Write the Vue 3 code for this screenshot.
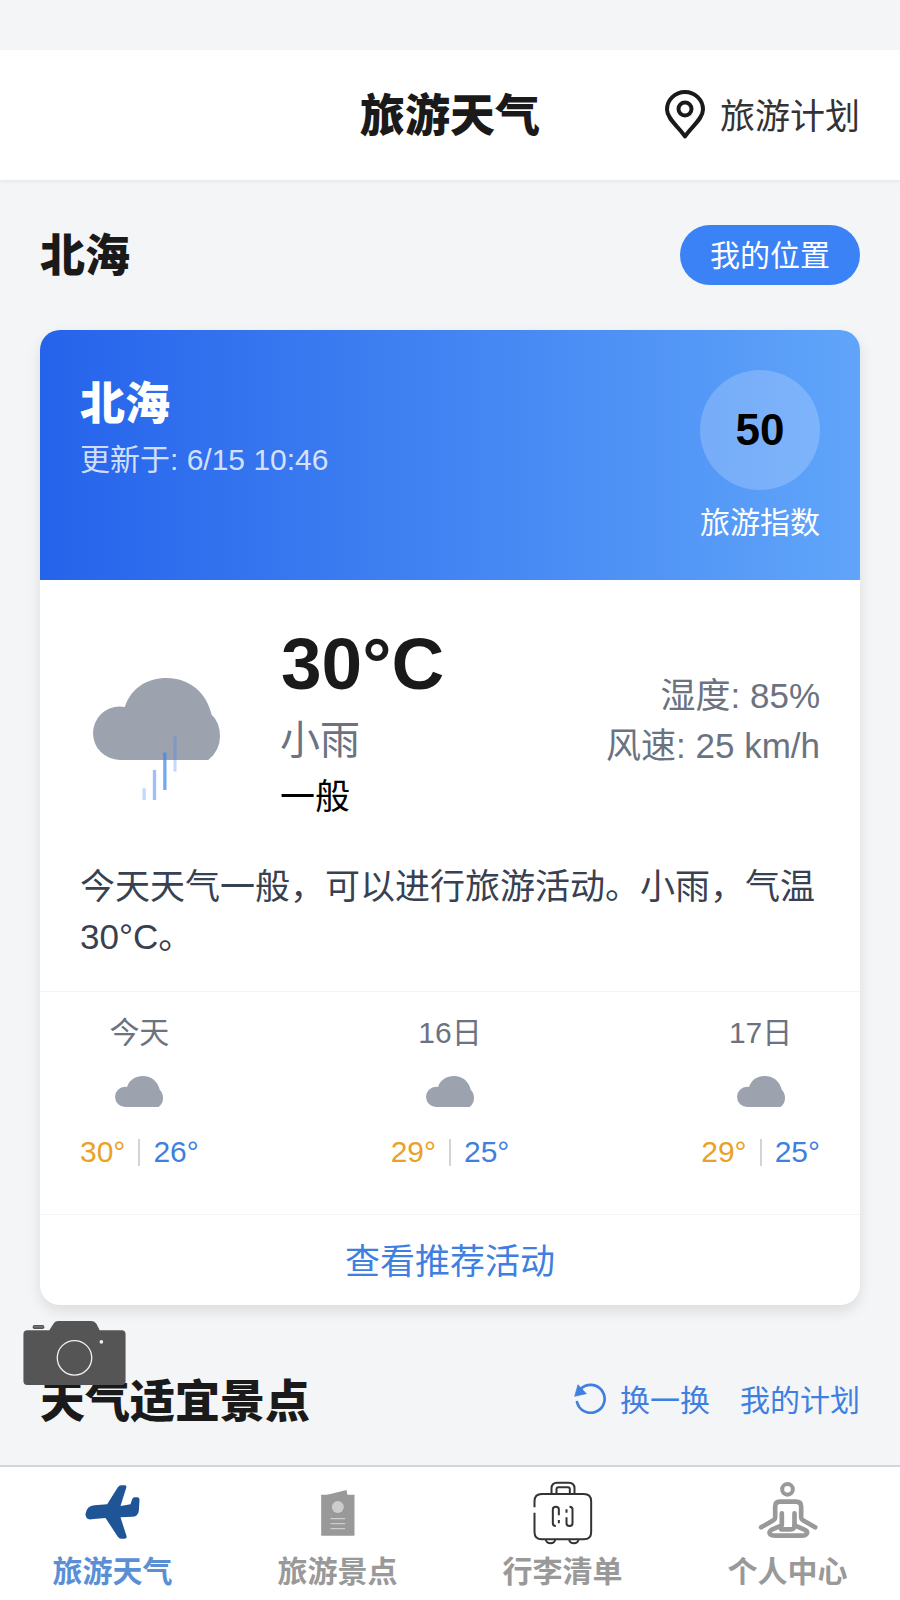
<script setup>
const cloud = 'M240 480A80 80 0 0 1 240 320Q248 320 255 322C275 262 325 235 380 235C450 235 500 280 515 345Q540 368 540 410Q540 452 505 480Z'
const forecast = [
  { day: '今天', high: 30, low: 26 },
  { day: '16日', high: 29, low: 25 },
  { day: '17日', high: 29, low: 25 }
]
</script>

<template>
  <div class="page">
    <header class="topbar">
      <span></span>
      <h1 class="app-title">旅游天气</h1>
      <div class="plan">
        <svg class="pin" viewBox="0 0 40 49" fill="none" stroke="#1a1a1a" stroke-width="4">
          <path d="M20 46.5C14 37 2 29 2 19.5A18 17.5 0 0 1 38 19.5C38 29 26 37 20 46.5Z" stroke-linejoin="round" />
          <circle cx="20" cy="19" r="6.5" />
        </svg>
        <span class="plan-text">旅游计划</span>
      </div>
    </header>

    <main class="content">
      <div class="loc-row">
        <h2 class="heading">北海</h2>
        <button class="loc-btn">我的位置</button>
      </div>

      <section class="card">
        <div class="card-head">
          <div>
            <div class="city">北海</div>
            <div class="updated">更新于: 6/15 10:46</div>
          </div>
          <div class="index">
            <div class="index-circle">50</div>
            <div class="index-label">旅游指数</div>
          </div>
        </div>

        <div class="now">
          <svg class="now-icon" viewBox="160 235 380 365">
            <path :d="cloud" fill="#9ca3af" />
            <g fill="#3b82f6">
              <rect x="401" y="410" width="9" height="105" opacity=".3" />
              <rect x="370" y="458" width="10" height="112" opacity=".7" />
              <rect x="339" y="510" width="10" height="90" opacity=".5" />
              <rect x="308" y="565" width="10" height="35" opacity=".3" />
            </g>
          </svg>
          <div class="now-main">
            <div class="temp">30°C</div>
            <div class="cond">小雨</div>
            <div class="grade">一般</div>
          </div>
          <div class="now-side">
            <div>湿度: 85%</div>
            <div>风速: 25 km/h</div>
          </div>
        </div>

        <p class="desc">今天天气一般，可以进行旅游活动。小雨，气温30°C。</p>

        <div class="forecast">
          <div v-for="f in forecast" :key="f.day" class="day">
            <div class="day-name">{{ f.day }}</div>
            <svg class="day-icon" viewBox="160 235 380 245">
              <path :d="cloud" fill="#9ca3af" />
            </svg>
            <div class="day-temp">
              <span class="high">{{ f.high }}°</span>
              <i class="sep"></i>
              <span class="low">{{ f.low }}°</span>
            </div>
          </div>
        </div>

        <div class="card-link">查看推荐活动</div>
      </section>

      <div class="spots-row">
        <h2 class="heading">天气适宜景点</h2>
        <div class="spots-actions">
          <span class="swap">
            <svg class="refresh" viewBox="370 250 105 96" fill="none">
              <path d="M392 272A42 42 0 1 1 382 310" stroke="currentColor" stroke-width="8" stroke-linecap="round" />
              <path d="M385 258L375 293L410 285Z" fill="currentColor" stroke="currentColor" stroke-width="2" stroke-linejoin="round" />
            </svg>
            换一换
          </span>
          <span>我的计划</span>
        </div>
      </div>
    </main>

    <nav class="tabbar">
      <div class="tab active">
        <svg class="tab-icon" viewBox="-7.5 0 270 240">
          <path fill="#1f5496" d="M45 132Q48 108 72 106L110 103L142 52Q146 46 152 46H162Q170 46 167 54L150 108L180 103L185 88Q187 82 192 82H200Q207 82 207 90L205 122Q203 140 185 140L150 142L168 198Q170 206 162 206H152Q146 206 142 200L105 144L62 148Q45 150 45 132Z" />
        </svg>
        <span>旅游天气</span>
      </div>
      <div class="tab">
        <svg class="tab-icon" viewBox="877.5 510 270 240">
          <path fill="#999" d="M975 586L1038 570L1041 586Z" />
          <rect x="962" y="584" width="100" height="123" rx="2" fill="#999" />
          <circle cx="1012" cy="621" r="18" fill="#ccc" />
          <path d="M990 656H1034M990 671H1034M990 686H1034" stroke="#ccc" stroke-width="4" />
        </svg>
        <span>旅游景点</span>
      </div>
      <div class="tab">
        <svg class="tab-icon" viewBox="-7.5 0 270 240" fill="none" stroke="#333" stroke-width="6">
          <path d="M42 112V94Q42 72 64 72H190Q212 72 212 94V186Q212 208 190 208H64Q42 208 42 186V128" />
          <path d="M93 72V55Q93 38 110 38H145Q162 38 162 55V72M108 72V58Q108 52 114 52H142Q148 52 148 58V72" />
          <path d="M76 208A14 12 0 0 0 104 208M146 208A14 12 0 0 0 174 208" />
          <path d="M115 136V118Q115 110 106 110Q97 110 97 118V160Q97 168 106 168M115 150V160" />
          <path d="M138 142V160Q138 168 147 168Q156 168 156 160V118Q156 110 147 110M138 118V128" />
        </svg>
        <span>行李清单</span>
      </div>
      <div class="tab">
        <svg class="tab-icon" viewBox="7.5 0 270 240" fill="none" stroke="#999" stroke-width="14" stroke-linecap="round" stroke-linejoin="round">
          <circle cx="141" cy="58" r="16" stroke-width="12" />
          <path d="M62 172L100 150Q104 148 104 142V110Q104 95 118 95H166Q182 95 182 110V142Q182 148 186 150L224 172" />
          <path d="M124 130V166L96 178Q82 186 90 194Q94 197 104 197H182Q198 197 200 188Q200 182 190 178L162 166V130" />
          <path d="M122 178H150Q163 178 162 166" />
        </svg>
        <span>个人中心</span>
      </div>
    </nav>

    <svg class="camera" viewBox="40 32 308 193">
      <rect x="68" y="44" width="35" height="12" rx="5" fill="#555" />
      <rect x="72" y="48" width="27" height="3" fill="#888" />
      <path fill="#555" d="M52 60H118L132 38Q136 32 145 32H245Q255 32 260 40L270 60H336Q348 60 348 72V213Q348 225 336 225H52Q40 225 40 213V72Q40 60 52 60Z" />
      <circle cx="194" cy="143" r="52" fill="none" stroke="#f0f0f0" stroke-width="4" />
      <circle cx="275" cy="95" r="5.5" fill="#f0f0f0" />
    </svg>
  </div>
</template>

<style>
html, body { margin: 0; background: #f3f5f7; }
</style>

<style scoped>
.page {
  position: relative;
  width: 900px;
  height: 1600px;
  overflow: hidden;
  display: flex;
  flex-direction: column;
  padding-top: 50px;
  box-sizing: border-box;
  background: #f3f5f7;
  font-family: "Liberation Sans", "Noto Sans CJK SC", sans-serif;
  color: #1a1a1a;
}
.topbar {
  flex: none;
  height: 130px;
  display: grid;
  grid-template-columns: 1fr auto 1fr;
  align-items: center;
  padding: 0 40px;
  background: #fff;
  box-shadow: 0 2px 4px rgba(0, 0, 0, .06);
  position: relative;
}
.app-title {
  margin: 0;
  box-sizing: border-box;
  height: 60px;
  padding-top: 2px;
  font-size: 45px;
  font-weight: 900;
  line-height: 60px;
}
.plan {
  justify-self: end;
  display: flex;
  align-items: center;
  gap: 15px;
  font-size: 35px;
  color: #333;
}
.plan-text { margin-bottom: 4px; }
.pin { width: 40px; height: 49px; margin-bottom: 2px; }
.content { flex: 1; min-height: 0; overflow: hidden; padding: 45px 40px 0; }
.loc-row, .spots-row { display: flex; justify-content: space-between; align-items: center; }
.heading {
  margin: 0;
  box-sizing: border-box;
  height: 60px;
  padding-top: 2px;
  font-size: 45px;
  font-weight: 900;
  line-height: 60px;
}
.loc-btn {
  width: 180px;
  height: 60px;
  border: 0;
  border-radius: 30px;
  padding: 0 0 4px;
  background: #3b82f6;
  color: #fff;
  font: inherit;
  font-size: 30px;
}
.card {
  margin-top: 45px;
  border-radius: 20px;
  overflow: hidden;
  background: #fff;
  box-shadow: 0 6px 14px rgba(0, 0, 0, .1);
}
.card-head {
  height: 250px;
  box-sizing: border-box;
  padding: 40px;
  display: flex;
  justify-content: space-between;
  color: #fff;
  background: linear-gradient(90deg, #2563eb, #60a5fa);
}
.city { font-size: 45px; font-weight: 900; line-height: 70px; }
.updated { font-size: 30px; line-height: 40px; color: rgba(255, 255, 255, .8); }
.index { width: 120px; text-align: center; }
.index-circle {
  height: 120px;
  border-radius: 50%;
  background: rgba(255, 255, 255, .2);
  color: #000;
  font-size: 44px;
  font-weight: 700;
  line-height: 120px;
}
.index-label { margin-top: 10px; font-size: 30px; line-height: 45px; white-space: nowrap; }
.now { display: flex; align-items: center; padding: 42px 40px 0; }
.now-icon { flex: none; width: 127px; height: 122px; margin: 34px 60px 0 13px; }
.now-main { flex: 1; }
.temp { margin: 2px 0 0 1px; font-size: 73px; font-weight: 700; line-height: 80px; }
.cond { margin-top: 11px; font-size: 40px; line-height: 50px; color: #6b7280; }
.grade { margin-top: 7px; font-size: 35px; line-height: 50px; color: #000; }
.now-side { margin-bottom: 2px; text-align: right; font-size: 35px; line-height: 50px; color: #6b7280; }
.desc { margin: 40px 0 0; padding: 0 40px 29px; font-size: 35px; line-height: 50px; color: #374151; }
.forecast {
  display: flex;
  justify-content: space-between;
  padding: 21px 40px 42px;
  border-top: 1px solid #f3f4f6;
  border-bottom: 1px solid #f3f4f6;
}
.day { display: flex; flex-direction: column; align-items: center; }
.day-name { font-size: 30px; line-height: 40px; color: #6b7280; }
.day-icon { width: 48px; height: 31px; margin-top: 23px; }
.day-temp {
  display: flex;
  align-items: center;
  gap: 13px;
  margin-top: 25px;
  font-size: 30px;
  line-height: 40px;
}
.high { color: #e9a126; }
.low { color: #3f7fe0; }
.sep { width: 2px; height: 27px; background: #d1d5db; }
.card-link {
  height: 90px;
  box-sizing: border-box;
  padding-bottom: 4px;
  display: flex;
  align-items: center;
  justify-content: center;
  font-size: 35px;
  color: #3f7fe0;
}
.spots-row { margin-top: 66px; }
.spots-actions {
  display: flex;
  align-items: center;
  gap: 30px;
  padding-bottom: 6px;
  font-size: 30px;
  color: #3f7fe0;
}
.swap { display: flex; align-items: center; gap: 12px; }
.refresh { width: 35px; height: 32px; }
.tabbar {
  flex: none;
  height: 135px;
  box-sizing: border-box;
  display: grid;
  grid-template-columns: repeat(4, 1fr);
  background: #fff;
  border-top: 2px solid #d1d5db;
}
.tab {
  display: flex;
  flex-direction: column;
  align-items: center;
  font-size: 30px;
  font-weight: 700;
  line-height: 40px;
  color: #999;
}
.tab.active { color: #5a8fd6; }
.tab-icon { flex: none; width: 90px; height: 80px; margin-top: 3px; margin-bottom: 2px; }
.camera { position: absolute; left: 23px; top: 1321px; width: 103px; height: 64px; }
</style>
